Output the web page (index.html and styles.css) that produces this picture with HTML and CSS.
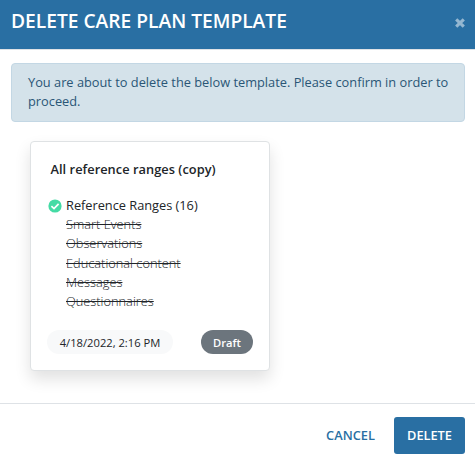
FILE: index.html
```html
<!DOCTYPE html>
<html lang="en">
<head>
<meta charset="utf-8">
<title>Delete care plan template</title>
<link rel="stylesheet" href="styles.css">
</head>
<body>
<div class="modal">
  <header class="modal-header">
    <h1 class="modal-title">DELETE CARE PLAN TEMPLATE</h1>
    <button class="close" aria-label="Close">
      <svg width="10" height="10" viewBox="0 0 10 10"><path d="M1.2 1.4 8.8 8.6M8.8 1.4 1.2 8.6" stroke="currentColor" stroke-width="3.2"/></svg>
    </button>
  </header>
  <main class="modal-body">
    <div class="alert">You are about to delete the below template. Please confirm in order to proceed.</div>
    <section class="card">
      <h2 class="card-title">All reference ranges (copy)</h2>
      <ul class="items">
        <li class="item active">
          <svg class="check" width="14" height="14" viewBox="0 0 14 14"><circle cx="7" cy="7" r="6.6" fill="#45dba5"/><path d="M3.4 7.2 6 9.6 10.6 4.8" fill="none" stroke="#fff" stroke-width="1.7"/></svg>
          <span>Reference Ranges (16)</span>
        </li>
        <li class="item off">Smart Events</li>
        <li class="item off">Observations</li>
        <li class="item off">Educational content</li>
        <li class="item off">Messages</li>
        <li class="item off">Questionnaires</li>
      </ul>
      <div class="card-footer">
        <span class="pill date">4/18/2022, 2:16 PM</span>
        <span class="pill draft">Draft</span>
      </div>
    </section>
  </main>
  <footer class="modal-footer">
    <button class="btn cancel">CANCEL</button>
    <button class="btn delete">DELETE</button>
  </footer>
</div>
</body>
</html>
```
FILE: styles.css
```css
* { box-sizing: border-box; }
body {
  margin: 0;
  background: #fff;
  color: #212529;
  font: 400 12.8px/19.2px "Open Sans", sans-serif;
}
button { border: 0; padding: 0; background: none; font: inherit; }
.modal { display: flex; flex-direction: column; width: 475px; height: 465px; overflow: hidden; }
.modal-header {
  display: flex;
  justify-content: space-between;
  height: 50px;
  padding: 7px 10px 0 11px;
  background: #296fa3;
  border-bottom: 1px solid #dee2e6;
  color: #fff;
}
.modal-title { margin: 0; font-size: 19.2px; line-height: 28px; font-weight: 600; white-space: nowrap; }
.close { display: flex; height: 10px; margin-top: 11px; color: #94b7d1; }
.modal-body { flex: none; height: 353px; padding: 13px 10px 0 11px; }
.alert {
  height: 59px;
  padding: 9px 14px 0 16px;
  border: 1px solid #c3d7e4;
  border-radius: 4px;
  background: #d4e2ea;
  color: #2a5676;
}
.card {
  display: flex;
  flex-direction: column;
  width: 240px;
  height: 230px;
  margin: 19px 0 0 19px;
  padding: 18px 16px 16px;
  border: 1px solid #dfe2e4;
  border-radius: 4px;
  background: #fff;
  box-shadow: 0 8px 16px rgba(0, 0, 0, .12);
}
.card-title { margin: 0 0 17px 3.5px; font-size: 12.8px; line-height: 19px; font-weight: 550; letter-spacing: .04px; }
.items { margin: 0; padding: 0; list-style: none; }
.item { height: 19.2px; padding-left: 19px; white-space: nowrap; }
.active { display: flex; gap: 4px; padding-left: 1px; }
.check { flex: none; margin-top: 3px; }
.active span { letter-spacing: -.02px; }
.off { font-weight: 300; text-decoration: line-through; }
.card-footer { display: flex; justify-content: space-between; margin-top: auto; }
.pill { display: flex; align-items: center; justify-content: center; height: 24px; border-radius: 12px; font-size: 11.2px; padding-top: 1px; white-space: nowrap; }
.date { width: 126px; background: #f8f9fa; }
.draft { width: 52px; background: #6c757d; color: #fff; font-weight: 550; }
.modal-footer {
  display: flex;
  flex: 1;
  justify-content: flex-end;
  padding: 13px 10px 0;
  border-top: 1px solid #dee2e6;
}
.btn { height: 37px; font-size: 12.8px; font-weight: 600; color: #296fa3; }
.cancel { width: 87px; }
.delete { width: 71px; border-radius: 3px; background: #296fa3; color: #fff; }
```
